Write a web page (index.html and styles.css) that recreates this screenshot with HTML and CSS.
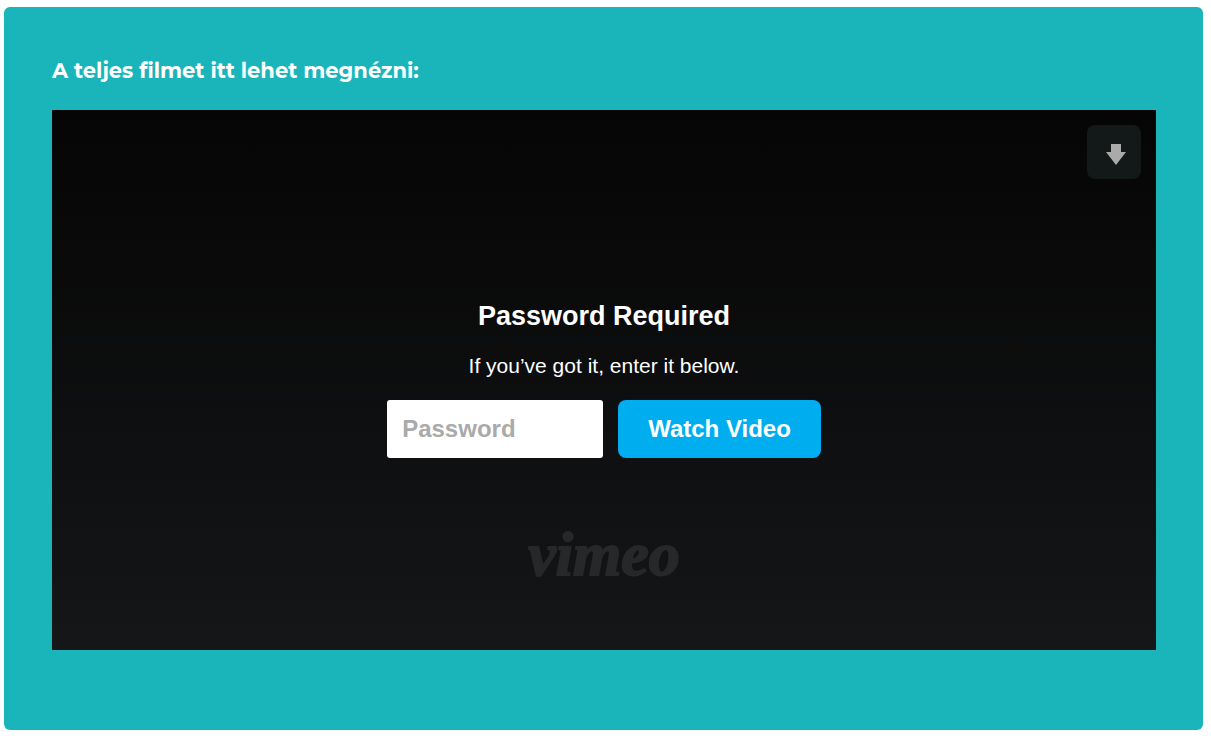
FILE: index.html
```
<!DOCTYPE html>
<html lang="hu">
<head>
  <meta charset="UTF-8">
  <meta name="viewport" content="width=device-width, initial-scale=1.0">
  <title>A teljes film</title>
  <link rel="stylesheet" href="styles.css">
</head>
<body>
  <main class="card">
    <h2 class="card-title">A teljes filmet itt lehet megnézni:</h2>

    <section class="player" lang="en">
      <button class="download" type="button" aria-label="Download">
        <svg class="download-icon" viewBox="0 0 20 22" aria-hidden="true">
          <path d="M5 1h10v8h5L10 22 0 9h5z" fill="#aaaaaa"/>
        </svg>
      </button>

      <h1 class="player-title">Password Required</h1>
      <p class="player-text">If you’ve got it, enter it below.</p>

      <form class="password-form">
        <input class="password-input" type="password" placeholder="Password" aria-label="Password">
        <button class="watch-button" type="submit">Watch Video</button>
      </form>

      <div class="logo">vimeo</div>
    </section>
  </main>
</body>
</html>
```
FILE: styles.css
```
* {
  box-sizing: border-box;
}

body {
  margin: 7px 8px 6px 4px;
  background-color: white;
  font-family: "Liberation Sans", Arial, sans-serif;
}

.card {
  padding: 48px 47px 80px 48px;
  border-radius: 6px;
  background-color: #1ab5bb;
}

.card-title {
  margin: 0 0 23px;
  color: white;
  font-family: Montserrat, Inter, sans-serif;
  font-size: 21px;
  font-weight: bold;
  line-height: 32px;
}

.player {
  position: relative;
  display: flex;
  flex-direction: column;
  align-items: center;
  padding: 190px 16px 60px;
  background: linear-gradient(#050505, #151618);
  color: white;
}

/* floats over the corner of the video */
.download {
  position: absolute;
  top: 15px;
  right: 15px;
  display: flex;
  align-items: center;
  justify-content: center;
  width: 54px;
  height: 54px;
  padding: 4px 0 0 3px;
  border: none;
  border-radius: 8px;
  background-color: #131819;
  cursor: pointer;
}

.download-icon {
  width: 20px;
  height: 22px;
}

.player-title {
  margin: 0;
  font-size: 27px;
  line-height: 32px;
}

.player-text {
  margin: 20px 0;
  font-size: 21px;
  line-height: 28px;
}

.password-form {
  display: flex;
  flex-wrap: wrap;
  justify-content: center;
  gap: 15px;
}

.password-input,
.watch-button {
  height: 58px;
  border: none;
  font-family: inherit;
  font-size: 24px;
  font-weight: bold;
}

.password-input {
  width: 216px;
  padding: 0 15px;
  border-radius: 3px;
  background-color: white;
}

.password-input::placeholder {
  color: #aaaaaa;
}

.watch-button {
  padding: 0 30px;
  border-radius: 8px;
  background-color: #00adef;
  color: white;
  cursor: pointer;
}

.logo {
  margin-top: 60px;
  color: #27282a;
  font-family: "Liberation Serif", serif;
  font-size: 62px;
  font-style: italic;
  font-weight: bold;
  line-height: 72px;
  -webkit-text-stroke: 2px #27282a;
}
```
